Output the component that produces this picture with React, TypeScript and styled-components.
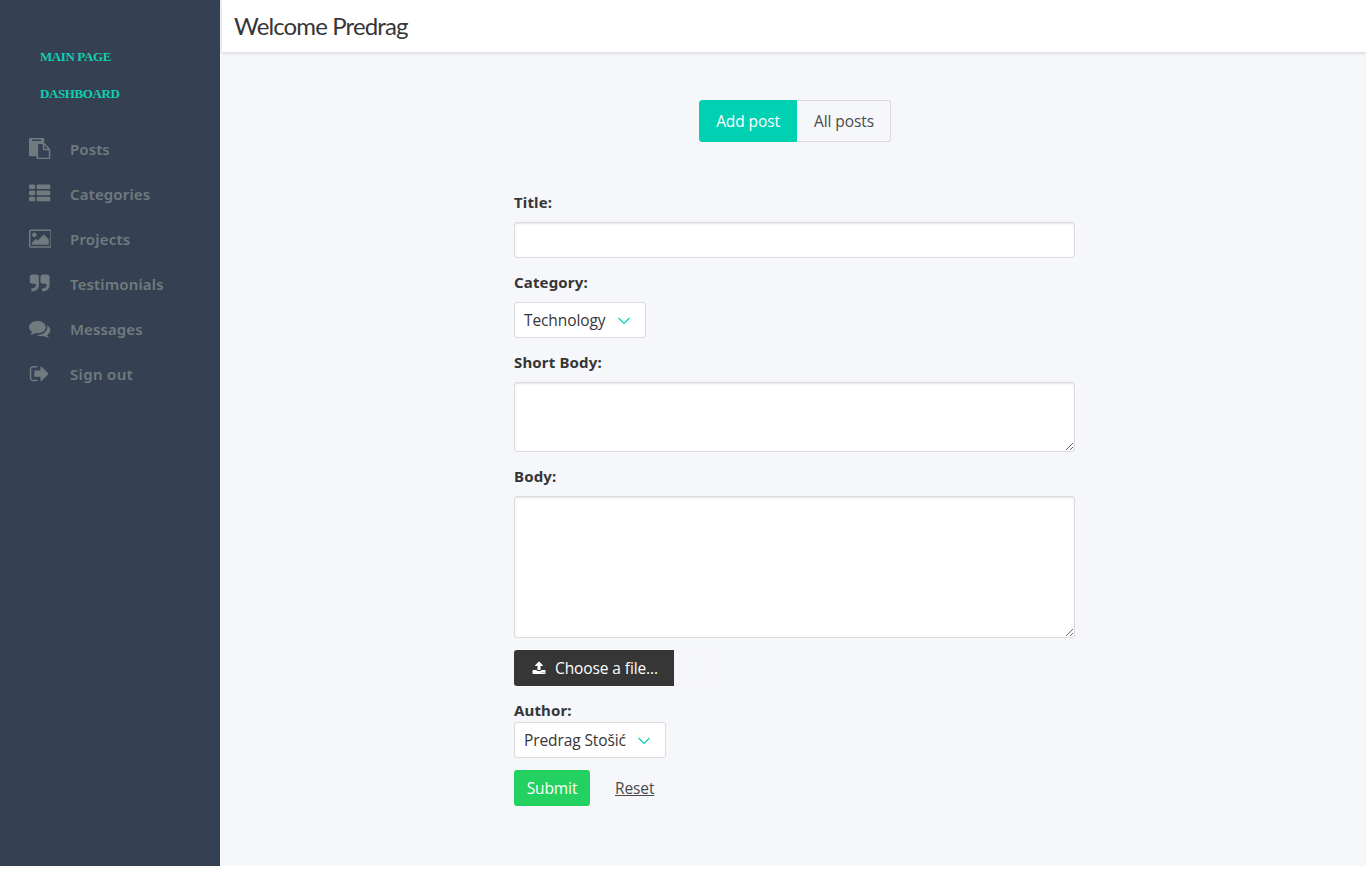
import React from 'react';
import styled, { createGlobalStyle } from 'styled-components';

const GlobalStyle = createGlobalStyle`
  *, *::before, *::after { box-sizing: border-box; }
  body {
    margin: 0;
    background: #fff;
    color: #363636;
    font-family: 'Open Sans', 'Noto Sans', sans-serif;
    font-size: 15.5px;
    line-height: 24px;
    letter-spacing: -0.1px;
  }
  input, textarea, button { font: inherit; letter-spacing: inherit; margin: 0; }
`;

const Page = styled.div`
  display: flex;
  height: 866px;
  background: #f5f7fb;
`;

const Sidebar = styled.aside`
  flex: 0 0 220px;
  background: #354052;
  padding-top: 38px;
`;

const TopLink = styled.a<{ $spacing: number }>`
  display: block;
  height: 37px;
  padding-left: 40px;
  line-height: 37px;
  color: #0fcfb0;
  font-family: 'Liberation Serif', serif;
  font-size: 13px;
  font-weight: 700;
  letter-spacing: ${p => p.$spacing}px;
`;

const Menu = styled.nav`
  display: flex;
  flex-direction: column;
  margin-top: 14px;
`;

const MenuItem = styled.a<{ $spacing: number }>`
  display: flex;
  align-items: center;
  height: 45px;
  padding-left: 25px;
  color: #6f7b7e;
  font-family: 'Noto Sans', sans-serif;
  font-size: 15px;
  font-weight: 600;
  letter-spacing: ${p => p.$spacing}px;
`;

const IconSlot = styled.span`
  display: flex;
  justify-content: center;
  width: 30px;
  margin: 0 15px 0 0;
`;

const Glyph = styled.svg`
  display: block;
  fill: currentColor;
`;

const Main = styled.main`
  flex: 1;
  padding-left: 2px;
`;

const Header = styled.header`
  height: 52px;
  padding-left: 12px;
  background: #fff;
  box-shadow: 0 1px 4px rgba(0, 0, 0, 0.16);
  color: #363636;
  font-family: Lato, sans-serif;
  font-size: 24px;
  line-height: 52px;
  letter-spacing: -0.87px;
`;

const Content = styled.div`
  width: 561px;
  margin: 48px 0 0 292px;
`;

const Tabs = styled.div`
  display: flex;
  width: 192px;
  margin: 0 auto 48px 185px;
`;

const Tab = styled.a<{ $active?: boolean; $width: number }>`
  display: flex;
  align-items: center;
  justify-content: center;
  width: ${p => p.$width}px;
  height: 42px;
  border: 1px solid ${p => (p.$active ? '#00d1b2' : '#dbdbdb')};
  border-left-color: ${p => (p.$active ? '#00d1b2' : 'transparent')};
  border-radius: ${p => (p.$active ? '3px 0 0 3px' : '0 3px 3px 0')};
  background: ${p => (p.$active ? '#00d1b2' : 'transparent')};
  color: ${p => (p.$active ? '#fff' : '#4a4a4a')};
`;

const Label = styled.label<{ $tight?: boolean }>`
  display: block;
  margin-bottom: ${p => (p.$tight ? 0 : 8)}px;
  font-family: 'Noto Sans', sans-serif;
  font-size: 15px;
  font-weight: 700;
  letter-spacing: 0.15px;
`;

const Field = styled.div`
  margin-bottom: 12px;
`;

const Input = styled.input`
  display: block;
  width: 100%;
  height: 36px;
  padding: 0 9px;
  border: 1px solid #dbdbdb;
  border-radius: 3px;
  background: #fff;
  box-shadow: inset 0 1px 2px rgba(10, 10, 10, 0.1);
`;

const TextArea = styled.textarea<{ $height: number }>`
  display: block;
  width: 100%;
  height: ${p => p.$height}px;
  padding: 9px;
  border: 1px solid #dbdbdb;
  border-radius: 3px;
  background: #fff;
  box-shadow: inset 0 1px 2px rgba(10, 10, 10, 0.1);
  resize: vertical;
`;

const Select = styled.button<{ $width: number }>`
  display: flex;
  align-items: center;
  justify-content: space-between;
  width: ${p => p.$width}px;
  height: 36px;
  padding: 0 14px 0 9px;
  border: 1px solid #dbdbdb;
  border-radius: 3px;
  background: #fff;
  color: #363636;
`;

const Chevron = styled.svg`
  display: block;
  margin-top: 1px;
  fill: none;
  stroke: #00d1b2;
  stroke-width: 1.2;
`;

const FileRow = styled.div`
  display: flex;
  height: 36px;
`;

const FileButton = styled.span`
  display: flex;
  align-items: center;
  width: 160px;
  padding-left: 18px;
  gap: 9px;
  border-radius: 3px 0 0 3px;
  background: #363636;
  color: #fff;
`;

const FileName = styled.span`
  width: 33px;
  border: 1px solid #f5f5f5;
  border-left: 0;
  border-radius: 0 3px 3px 0;
`;

const Actions = styled.div`
  display: flex;
`;

const Submit = styled.button`
  width: 76px;
  height: 36px;
  padding: 0;
  border: 0;
  border-radius: 3px;
  background: #23d160;
  color: #fff;
`;

const Reset = styled.button`
  height: 36px;
  margin-left: 25px;
  padding: 0;
  border: 0;
  background: none;
  color: #4a4a4a;
  text-decoration: underline;
`;

const paths = {
  paste: 'M768 1664h896v-640h-416q-40 0-68-28t-28-68v-416h-384v1152zm256-1440v-64q0-13-9.5-22.5t-22.5-9.5h-704q-13 0-22.5 9.5t-9.5 22.5v64q0 13 9.5 22.5t22.5 9.5h704q13 0 22.5-9.5t9.5-22.5zm256 672h299l-299-299v299zm512 128v672q0 40-28 68t-68 28h-960q-40 0-68-28t-28-68v-160h-544q-40 0-68-28t-28-68v-1344q0-40 28-68t68-28h1088q40 0 68 28t28 68v328q21 13 36 28l408 408q28 28 48 76t20 88z',
  list: 'M512 1248v192q0 40-28 68t-68 28h-320q-40 0-68-28t-28-68v-192q0-40 28-68t68-28h320q40 0 68 28t28 68zm0-512v192q0 40-28 68t-68 28h-320q-40 0-68-28t-28-68v-192q0-40 28-68t68-28h320q40 0 68 28t28 68zm1280 512v192q0 40-28 68t-68 28h-960q-40 0-68-28t-28-68v-192q0-40 28-68t68-28h960q40 0 68 28t28 68zm-1280-1024v192q0 40-28 68t-68 28h-320q-40 0-68-28t-28-68v-192q0-40 28-68t68-28h320q40 0 68 28t28 68zm1280 512v192q0 40-28 68t-68 28h-960q-40 0-68-28t-28-68v-192q0-40 28-68t68-28h960q40 0 68 28t28 68zm0-512v192q0 40-28 68t-68 28h-960q-40 0-68-28t-28-68v-192q0-40 28-68t68-28h960q40 0 68 28t28 68z',
  picture: 'M640 576q0 80-56 136t-136 56-136-56-56-136 56-136 136-56 136 56 56 136zm1024 384v448h-1408v-192l320-320 160 160 512-512zm96-704h-1600q-13 0-22.5 9.5t-9.5 22.5v1216q0 13 9.5 22.5t22.5 9.5h1600q13 0 22.5-9.5t9.5-22.5v-1216q0-13-9.5-22.5t-22.5-9.5zm160 32v1216q0 66-47 113t-113 47h-1600q-66 0-113-47t-47-113v-1216q0-66 47-113t113-47h1600q66 0 113 47t47 113z',
  quote: 'M832 320v704q0 104-40.5 198.5t-109.5 163.5-163.5 109.5-198.5 40.5h-64q-26 0-45-19t-19-45v-128q0-26 19-45t45-19h64q106 0 181-75t75-181v-32q0-40-28-68t-68-28h-224q-80 0-136-56t-56-136v-384q0-80 56-136t136-56h384q80 0 136 56t56 136zm896 0v704q0 104-40.5 198.5t-109.5 163.5-163.5 109.5-198.5 40.5h-64q-26 0-45-19t-19-45v-128q0-26 19-45t45-19h64q106 0 181-75t75-181v-32q0-40-28-68t-68-28h-224q-80 0-136-56t-56-136v-384q0-80 56-136t136-56h384q80 0 136 56t56 136z',
  comments: 'M1408 768q0 139-94 257t-256.5 186.5-353.5 68.5q-86 0-176-16-124 88-278 128-36 9-86 16h-3q-11 0-20.5-8t-11.5-21q-1-3-1-6.5t.5-6.5 2-6l2.5-5 3.5-5.5 4-5 4.5-5 4-4.5q5-6 23-25t26-29.5 22.5-29 25-38.5 20.5-44q-124-72-195-177t-71-224q0-139 94-257t256.5-186.5 353.5-68.5 353.5 68.5 256.5 186.5 94 257zm384 256q0 120-71 224.5t-195 176.5q10 24 20.5 44t25 38.5 22.5 29 26 29.5 23 25q1 1 4 4.5t4.5 5 4 5 3.5 5.5l2.5 5 2 6 .5 6.5-1 6.5q-3 14-13 22t-22 7q-50-7-86-16-154-40-278-128-90 16-176 16-271 0-472-132 58 4 88 4 161 0 309-45t264-129q125-92 192-212t67-254q0-77-23-152 129 71 204 178t75 230z',
  signOut: 'M704 1440q0 4 1 20t.5 26.5-3 23.5-10 19.5-20.5 6.5h-320q-119 0-203.5-84.5t-84.5-203.5v-704q0-119 84.5-203.5t203.5-84.5h320q13 0 22.5 9.5t9.5 22.5q0 4 1 20t.5 26.5-3 23.5-10 19.5-20.5 6.5h-320q-66 0-113 47t-47 113v704q0 66 47 113t113 47h312l11.5 1 11.5 3 8 5.5 7 9 2 13.5zm928-544q0 26-19 45l-544 544q-19 19-45 19t-45-19-19-45v-288h-448q-26 0-45-19t-19-45v-384q0-26 19-45t45-19h448v-288q0-26 19-45t45-19 45 19l544 544q19 19 19 45z',
  upload: 'M1344 1472q0-26-19-45t-45-19-45 19-19 45 19 45 45 19 45-19 19-45zm256 0q0-26-19-45t-45-19-45 19-19 45 19 45 45 19 45-19 19-45zm128-224v320q0 40-28 68t-68 28h-1472q-40 0-68-28t-28-68v-320q0-40 28-68t68-28h427q21 56 70.5 92t110.5 36h256q61 0 110.5-36t70.5-92h427q40 0 68 28t28 68zm-325-648q-17 40-59 40h-256v448q0 26-19 45t-45 19h-256q-26 0-45-19t-19-45v-448h-256q-42 0-59-40-17-39 14-69l448-448q18-19 45-19t45 19l448 448q31 30 14 69z',
};

type IconName = keyof typeof paths;

function Icon({ name, size }: { name: IconName; size: number }) {
  const units = name === 'picture' ? 1920 : 1792;
  return (
    <Glyph width={(size * units) / 1792} height={size} viewBox={`0 0 ${units} 1792`}>
      <path d={paths[name]} />
    </Glyph>
  );
}

function Arrow() {
  return (
    <Chevron width="14" height="8" viewBox="0 0 14 8">
      <path d="M1.5 1l5.5 5.5L12.5 1" />
    </Chevron>
  );
}

const menu: { icon: IconName; text: string; spacing: number }[] = [
  { icon: 'paste', text: 'Posts', spacing: 0.1 },
  { icon: 'list', text: 'Categories', spacing: 0.15 },
  { icon: 'picture', text: 'Projects', spacing: 0.2 },
  { icon: 'quote', text: 'Testimonials', spacing: 0.15 },
  { icon: 'comments', text: 'Messages', spacing: 0.1 },
  { icon: 'signOut', text: 'Sign out', spacing: 0.35 },
];

export default function App() {
  return (
    <>
      <GlobalStyle />
      <Page>
        <Sidebar>
          <TopLink $spacing={-0.4}>MAIN PAGE</TopLink>
          <TopLink $spacing={-0.4}>DASHBOARD</TopLink>
          <Menu>
            {menu.map(m => (
              <MenuItem key={m.text} $spacing={m.spacing}>
                <IconSlot><Icon name={m.icon} size={21.33} /></IconSlot>
                {m.text}
              </MenuItem>
            ))}
          </Menu>
        </Sidebar>
        <Main>
          <Header>Welcome Predrag</Header>
          <Content>
            <Tabs>
              <Tab $active $width={98}>Add post</Tab>
              <Tab $width={94}>All posts</Tab>
            </Tabs>
            <Field>
              <Label>Title:</Label>
              <Input />
            </Field>
            <Field>
              <Label>Category:</Label>
              <Select $width={132}>Technology<Arrow /></Select>
            </Field>
            <Field>
              <Label>Short Body:</Label>
              <TextArea $height={70} />
            </Field>
            <Field>
              <Label>Body:</Label>
              <TextArea $height={142} />
            </Field>
            <Field>
              <FileRow>
                <FileButton><Icon name="upload" size={14} />Choose a file...</FileButton>
                <FileName />
              </FileRow>
            </Field>
            <Field>
              <Label $tight>Author:</Label>
              <Select $width={152}>Predrag Stošić<Arrow /></Select>
            </Field>
            <Actions>
              <Submit>Submit</Submit>
              <Reset>Reset</Reset>
            </Actions>
          </Content>
        </Main>
      </Page>
    </>
  );
}
